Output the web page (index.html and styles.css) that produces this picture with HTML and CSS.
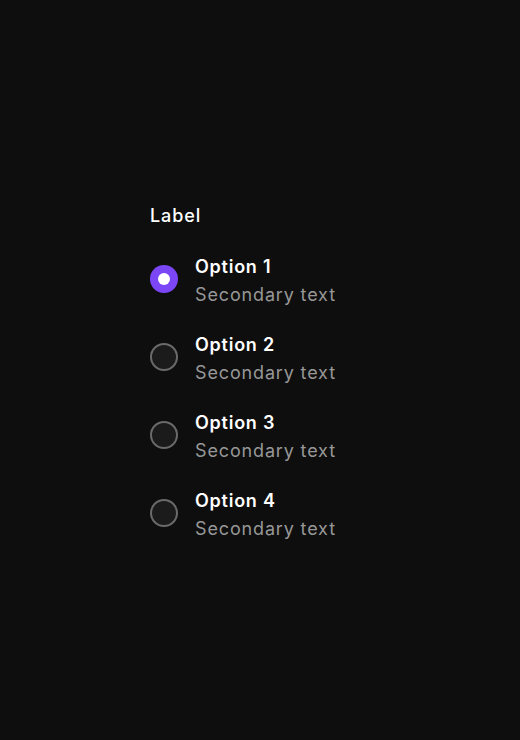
FILE: index.html
```html
<!DOCTYPE html>
<html>
<head>
<meta charset="utf-8">
<link rel="stylesheet" href="styles.css">
</head>
<body>
<div class="page">
  <div class="group" role="radiogroup">
    <div class="group-label">Label</div>
    <div class="options">
      <label class="option">
        <span class="radio checked"><span class="dot"></span></span>
        <span class="text">
          <span class="title">Option 1</span>
          <span class="sub">Secondary text</span>
        </span>
      </label>
      <label class="option">
        <span class="radio"></span>
        <span class="text">
          <span class="title">Option 2</span>
          <span class="sub">Secondary text</span>
        </span>
      </label>
      <label class="option">
        <span class="radio"></span>
        <span class="text">
          <span class="title">Option 3</span>
          <span class="sub">Secondary text</span>
        </span>
      </label>
      <label class="option">
        <span class="radio"></span>
        <span class="text">
          <span class="title">Option 4</span>
          <span class="sub">Secondary text</span>
        </span>
      </label>
    </div>
  </div>
</div>
</body>
</html>
```
FILE: styles.css
```css
html, body {
  margin: 0;
  padding: 0;
  background: #0e0e0e;
}
body {
  font-family: Inter, "Noto Sans", sans-serif;
  color: #ffffff;
}
.page {
  box-sizing: border-box;
  width: 520px;
  height: 740px;
  padding-top: 5px;
  display: flex;
  align-items: center;
  justify-content: center;
}
.group {
  width: 220px;
  display: flex;
  flex-direction: column;
  gap: 23px;
}
.group-label {
  font-size: 18px;
  line-height: 28px;
  font-weight: 500;
  letter-spacing: 0.9px;
  color: #ffffff;
}
.options {
  display: flex;
  flex-direction: column;
  gap: 22.33px;
}
.option {
  display: flex;
  align-items: flex-start;
  gap: 17px;
}
.radio {
  box-sizing: border-box;
  width: 28px;
  height: 28px;
  margin-top: 12px;
  flex: none;
  border-radius: 50%;
  border: 2px solid #6a6a6a;
  background: #1b1b1b;
  display: flex;
  align-items: center;
  justify-content: center;
}
.radio.checked {
  border: none;
  background: #7b46f6;
}
.dot {
  width: 12px;
  height: 12px;
  border-radius: 50%;
  background: #ffffff;
}
.text {
  display: flex;
  flex-direction: column;
}
.title {
  font-size: 18px;
  line-height: 28px;
  font-weight: 600;
  letter-spacing: 0.75px;
  color: #ffffff;
}
.sub {
  font-size: 18px;
  line-height: 28px;
  font-weight: 400;
  letter-spacing: 0.85px;
  color: #979797;
}
```
